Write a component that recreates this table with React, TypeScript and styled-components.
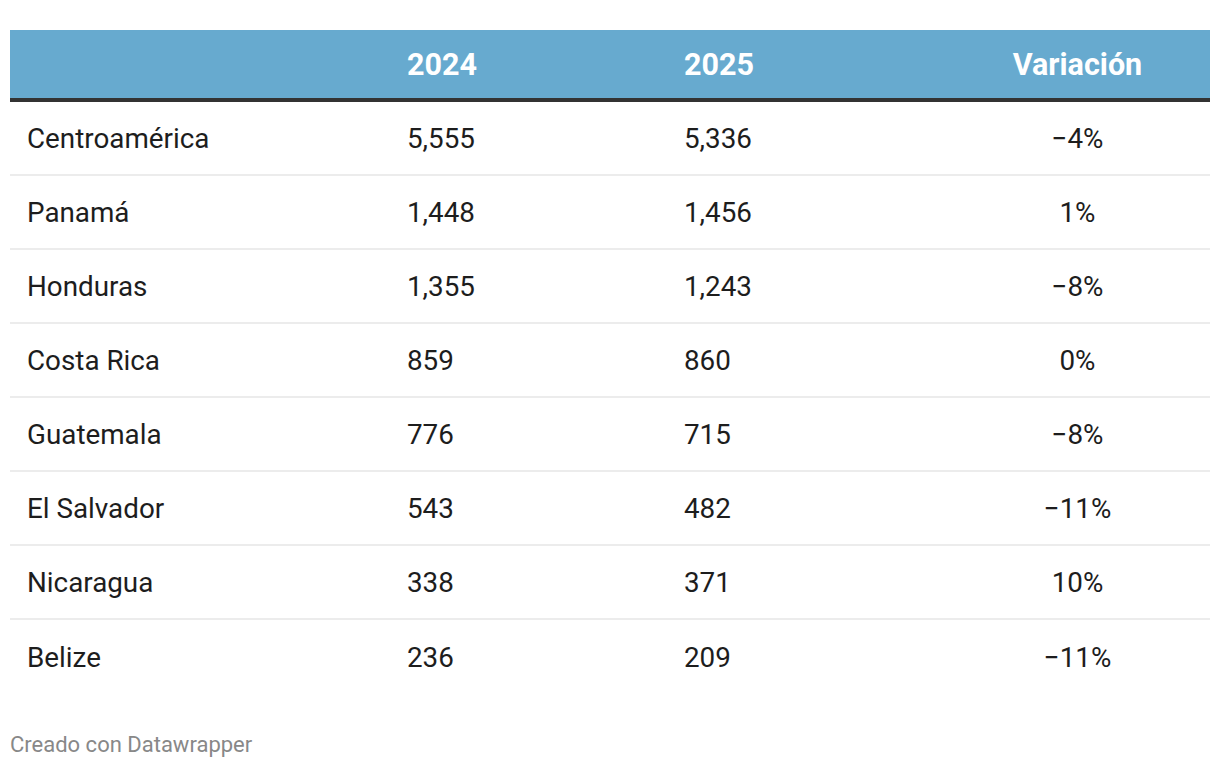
import React from "react";
import styled, { createGlobalStyle } from "styled-components";

const GlobalStyle = createGlobalStyle`
  body {
    margin: 0;
    background: #ffffff;
    font-family: Roboto, "Liberation Sans", sans-serif;
  }
`;

// filas de la tabla
const rows = [
  { name: "Centroamérica", y2024: "5,555", y2025: "5,336", change: "−4%" },
  { name: "Panamá", y2024: "1,448", y2025: "1,456", change: "1%" },
  { name: "Honduras", y2024: "1,355", y2025: "1,243", change: "−8%" },
  { name: "Costa Rica", y2024: "859", y2025: "860", change: "0%" },
  { name: "Guatemala", y2024: "776", y2025: "715", change: "−8%" },
  { name: "El Salvador", y2024: "543", y2025: "482", change: "−11%" },
  { name: "Nicaragua", y2024: "338", y2025: "371", change: "10%" },
  { name: "Belize", y2024: "236", y2025: "209", change: "−11%" },
];

const Page = styled.div`
  padding: 30px 10px 0 10px;
  width: 1200px;
`;

const Table = styled.div`
  width: 1200px;
`;

const HeaderRow = styled.div`
  display: grid;
  grid-template-columns: 380px 277px 278px 265px;
  height: 68px;
  align-items: center;
  background-color: #67aacf;
  border-bottom: 4px solid #333333;
`;

const HeaderCell = styled.div<{ $center?: boolean }>`
  color: #ffffff;
  font-weight: 700;
  font-size: 30.5px;
  padding-left: ${(p) => (p.$center ? "0" : "17px")};
  text-align: ${(p) => (p.$center ? "center" : "left")};
`;

const Row = styled.div<{ $last?: boolean }>`
  display: grid;
  grid-template-columns: 380px 277px 278px 265px;
  height: ${(p) => (p.$last ? "74px" : "72px")};
  align-items: center;
  border-bottom: ${(p) => (p.$last ? "none" : "2px solid #ececec")};
`;

const Cell = styled.div<{ $center?: boolean }>`
  color: #1d1d1d;
  font-size: 27.8px;
  padding-left: ${(p) => (p.$center ? "0" : "17px")};
  text-align: ${(p) => (p.$center ? "center" : "left")};
`;

const Footer = styled.div`
  margin-top: 38px;
  font-size: 22px;
  color: #888888;
`;

export default function App() {
  return (
    <Page>
      <GlobalStyle />
      <Table>
        <HeaderRow>
          <HeaderCell />
          <HeaderCell>2024</HeaderCell>
          <HeaderCell>2025</HeaderCell>
          <HeaderCell $center>Variación</HeaderCell>
        </HeaderRow>
        {rows.map((r, i) => (
          <Row key={r.name} $last={i === rows.length - 1}>
            <Cell>{r.name}</Cell>
            <Cell>{r.y2024}</Cell>
            <Cell>{r.y2025}</Cell>
            <Cell $center>{r.change}</Cell>
          </Row>
        ))}
      </Table>
      <Footer>Creado con Datawrapper</Footer>
    </Page>
  );
}
